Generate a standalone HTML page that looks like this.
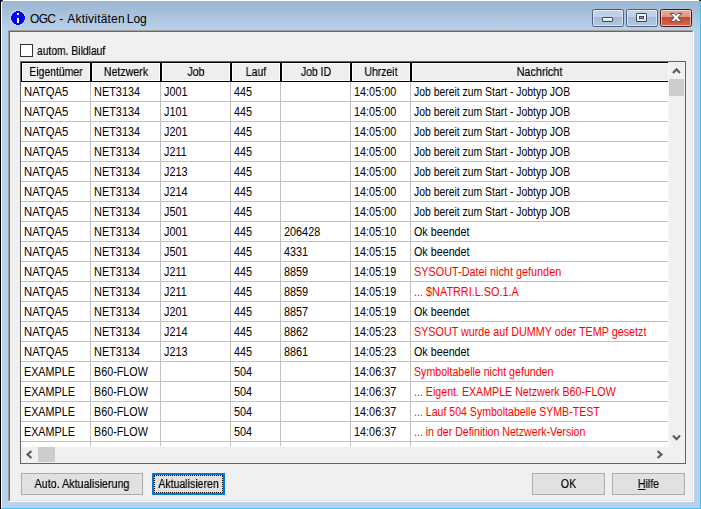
<!DOCTYPE html>
<html><head><meta charset="utf-8"><title>OGC - Aktivitäten Log</title>
<style>
html,body{margin:0;padding:0;}
body{width:701px;height:509px;overflow:hidden;position:relative;background:#b9d1ea;font-family:"Liberation Sans",sans-serif;}
div,span{position:absolute;box-sizing:border-box;}
.t{white-space:nowrap;color:#000;}
#titlebg{left:0;top:0;width:701px;height:30px;background:linear-gradient(#99b4d1,#b9d1ea);}
#client{left:8px;top:30px;width:686px;height:472px;background:#f0f0f0;border-top:1px solid #a0a0a0;border-left:1px solid #a0a0a0;border-right:1px solid #fff;border-bottom:1px solid #fff;}
#client2{left:9px;top:31px;width:684px;height:470px;border-top:1px solid #696969;border-left:1px solid #696969;border-right:1px solid #e3e3e3;border-bottom:1px solid #e3e3e3;}
.cb{left:592px;top:9px;width:32px;height:18px;border:1px solid #4f5e7b;border-radius:2.5px;background:linear-gradient(#bfd2e8 0,#bcd0e7 44%,#a3bad6 45%,#b2c8e2 100%);}
.cb:after{content:"";position:absolute;left:0;top:0;right:0;bottom:0;border:1px solid rgba(255,255,255,.55);border-radius:1.5px;}
.hc{top:62px;height:20px;border:1px solid #000;background:#eee;}
.hc:after{content:"";position:absolute;left:0;top:0;right:0;bottom:0;border:1px solid #fff;}
.ht{will-change:transform;top:62px;height:20px;line-height:20px;font-size:12px;text-align:center;transform:scaleX(.87);-webkit-text-stroke:0.2px #000;}
.c{font-size:12px;height:19px;line-height:19px;transform:scaleX(.905);transform-origin:0 0;}
.r{color:#f00;}
.hl{left:21px;width:647px;height:1px;background:#c0c0c0;}
.vl{top:82px;height:364px;width:1px;background:#c0c0c0;}
.btn{top:473px;height:22px;background:#e1e1e1;border:1px solid #adadad;}
.bt{will-change:transform;top:473px;height:22px;line-height:22px;font-size:12px;text-align:center;transform:scaleX(.88);-webkit-text-stroke:0.2px #000;}
</style></head><body>
<div id="titlebg"></div>
<div style="left:0;top:0;width:1px;height:509px;background:#000"></div>
<div style="left:1px;top:0;width:1px;height:508px;background:#fff"></div>
<div style="left:1px;top:0;width:699px;height:1px;background:#fff"></div>
<div style="left:700px;top:1px;width:1px;height:508px;background:#36c6ee"></div>
<div style="left:1px;top:508px;width:700px;height:1px;background:#36c6ee"></div>
<div style="left:0;top:0;width:3px;height:1px;background:#222"></div><div style="left:1px;top:1px;width:1px;height:1px;background:#333"></div><div style="left:0;top:0;width:1px;height:1px;background:#aaa"></div>
<div style="left:0;top:0;width:1px;height:3px;background:#000"></div>
<div style="left:699px;top:0;width:2px;height:1px;background:#222"></div>

<div style="left:10px;top:10px;width:16px;height:16px;border-radius:8px;background:rgba(214,236,222,.55)"></div>
<svg style="position:absolute;left:11px;top:11px" width="14" height="14" shape-rendering="crispEdges">
<rect x="5" y="0" width="4" height="1" fill="#0000ff"/>
<rect x="3" y="1" width="8" height="1" fill="#0000ff"/>
<rect x="2" y="2" width="10" height="1" fill="#0000ff"/>
<rect x="1" y="3" width="12" height="1" fill="#0000ff"/>
<rect x="1" y="4" width="12" height="1" fill="#0000ff"/>
<rect x="0" y="5" width="14" height="1" fill="#0000ff"/>
<rect x="0" y="6" width="14" height="1" fill="#0000ff"/>
<rect x="0" y="7" width="14" height="1" fill="#0000ff"/>
<rect x="0" y="8" width="14" height="1" fill="#0000ff"/>
<rect x="1" y="9" width="12" height="1" fill="#0000ff"/>
<rect x="1" y="10" width="12" height="1" fill="#0000ff"/>
<rect x="2" y="11" width="10" height="1" fill="#0000ff"/>
<rect x="3" y="12" width="8" height="1" fill="#0000ff"/>
<rect x="5" y="13" width="4" height="1" fill="#0000ff"/>
<rect x="6" y="2" width="2" height="2" fill="#fff"/><rect x="6" y="7" width="2" height="5" fill="#fff"/></svg>
<span class="t" id="title" style="left:30px;top:12px;font-size:12px;line-height:14px;"><span style="position:static;letter-spacing:-0.7px">OGC</span><span style="position:static;word-spacing:0.7px"> - </span><span style="position:static;letter-spacing:0.2px">Aktivitäten</span><span style="position:static;margin-left:-1.5px"> Log</span></span>
<div class="cb" style="left:592px"></div>
<div class="cb" style="left:626px"></div>
<div class="cb" style="left:660px;border-color:#47141c;background:linear-gradient(#e9a99a 0,#e09383 44%,#c4492b 45%,#d4694d 100%)"></div>
<div style="left:602px;top:17px;width:11px;height:5px;background:linear-gradient(#fff,#d9dde5);border:1px solid #414960;border-radius:1px"></div>
<div style="left:636px;top:13px;width:11px;height:9px;background:linear-gradient(#fff,#dde1e8);border:1px solid #414960;border-radius:1px"></div>
<div style="left:639px;top:16px;width:5px;height:3px;background:#8fb0d8;border:1px solid #3c445c"></div>
<svg style="position:absolute;left:667.6px;top:11px" width="16" height="13" viewBox="-2 -2 16 13"><path d="M0.2 0.4H4.2L6 2.4 7.8 0.4H11.8L8 4.5 11.8 8.6H7.8L6 6.6 4.2 8.6H0.2L4 4.5Z" fill="#fff" stroke="#45404a" stroke-width="0.9" stroke-linejoin="round"/></svg>
<div id="client"></div><div id="client2"></div>
<div style="left:20px;top:44px;width:13px;height:13px;background:#fff;border:1px solid #333"></div>
<span class="t" id="cblabel" style="will-change:transform;left:37px;top:44px;font-size:12px;line-height:15px;transform:scaleX(.86);transform-origin:0 0;-webkit-text-stroke:0.2px #000">autom. Bildlauf</span>
<div style="left:20px;top:61px;width:666px;height:403px;border:1px solid #646464;background:#fff"></div>
<div class="hc" style="left:21px;width:70px"></div>
<span class="t ht" style="left:21px;width:70px;transform:scaleX(0.8700)">Eigentümer</span>
<div class="hc" style="left:91px;width:70px"></div>
<span class="t ht" style="left:91px;width:70px;transform:scaleX(0.8882)">Netzwerk</span>
<div class="hc" style="left:161px;width:70px"></div>
<span class="t ht" style="left:161px;width:70px;transform:scaleX(0.8700)">Job</span>
<div class="hc" style="left:231px;width:50px"></div>
<span class="t ht" style="left:231px;width:50px;transform:scaleX(0.8700)">Lauf</span>
<div class="hc" style="left:281px;width:70px"></div>
<span class="t ht" style="left:281px;width:70px;transform:scaleX(0.8700)">Job ID</span>
<div class="hc" style="left:351px;width:60px"></div>
<span class="t ht" style="left:351px;width:60px;transform:scaleX(0.8700)">Uhrzeit</span>
<div class="hc" style="left:411px;width:269px"></div>
<span class="t ht" style="left:411px;width:257px;transform:scaleX(0.9036)">Nachricht</span>
<div class="hl" style="top:101px"></div>
<span class="c t" style="left:24px;top:83px;transform:scaleX(0.9382)">NATQA5</span>
<span class="c t" style="left:94px;top:83px;transform:scaleX(0.9091)">NET3134</span>
<span class="c t" style="left:164px;top:83px;transform:scaleX(0.9050)">J001</span>
<span class="c t" style="left:234px;top:83px;transform:scaleX(0.9050)">445</span>
<span class="c t" style="left:354px;top:83px;transform:scaleX(0.9050)">14:05:00</span>
<span class="c t" style="left:414px;top:83px;transform:scaleX(0.8667)">Job bereit zum Start - Jobtyp JOB</span>
<div class="hl" style="top:121px"></div>
<span class="c t" style="left:24px;top:103px;transform:scaleX(0.9382)">NATQA5</span>
<span class="c t" style="left:94px;top:103px;transform:scaleX(0.9091)">NET3134</span>
<span class="c t" style="left:164px;top:103px;transform:scaleX(0.9050)">J101</span>
<span class="c t" style="left:234px;top:103px;transform:scaleX(0.9050)">445</span>
<span class="c t" style="left:354px;top:103px;transform:scaleX(0.9050)">14:05:00</span>
<span class="c t" style="left:414px;top:103px;transform:scaleX(0.8667)">Job bereit zum Start - Jobtyp JOB</span>
<div class="hl" style="top:141px"></div>
<span class="c t" style="left:24px;top:123px;transform:scaleX(0.9382)">NATQA5</span>
<span class="c t" style="left:94px;top:123px;transform:scaleX(0.9091)">NET3134</span>
<span class="c t" style="left:164px;top:123px;transform:scaleX(0.9050)">J201</span>
<span class="c t" style="left:234px;top:123px;transform:scaleX(0.9050)">445</span>
<span class="c t" style="left:354px;top:123px;transform:scaleX(0.9050)">14:05:00</span>
<span class="c t" style="left:414px;top:123px;transform:scaleX(0.8667)">Job bereit zum Start - Jobtyp JOB</span>
<div class="hl" style="top:161px"></div>
<span class="c t" style="left:24px;top:143px;transform:scaleX(0.9382)">NATQA5</span>
<span class="c t" style="left:94px;top:143px;transform:scaleX(0.9091)">NET3134</span>
<span class="c t" style="left:164px;top:143px;transform:scaleX(0.9050)">J211</span>
<span class="c t" style="left:234px;top:143px;transform:scaleX(0.9050)">445</span>
<span class="c t" style="left:354px;top:143px;transform:scaleX(0.9050)">14:05:00</span>
<span class="c t" style="left:414px;top:143px;transform:scaleX(0.8667)">Job bereit zum Start - Jobtyp JOB</span>
<div class="hl" style="top:181px"></div>
<span class="c t" style="left:24px;top:163px;transform:scaleX(0.9382)">NATQA5</span>
<span class="c t" style="left:94px;top:163px;transform:scaleX(0.9091)">NET3134</span>
<span class="c t" style="left:164px;top:163px;transform:scaleX(0.9050)">J213</span>
<span class="c t" style="left:234px;top:163px;transform:scaleX(0.9050)">445</span>
<span class="c t" style="left:354px;top:163px;transform:scaleX(0.9050)">14:05:00</span>
<span class="c t" style="left:414px;top:163px;transform:scaleX(0.8667)">Job bereit zum Start - Jobtyp JOB</span>
<div class="hl" style="top:201px"></div>
<span class="c t" style="left:24px;top:183px;transform:scaleX(0.9382)">NATQA5</span>
<span class="c t" style="left:94px;top:183px;transform:scaleX(0.9091)">NET3134</span>
<span class="c t" style="left:164px;top:183px;transform:scaleX(0.9050)">J214</span>
<span class="c t" style="left:234px;top:183px;transform:scaleX(0.9050)">445</span>
<span class="c t" style="left:354px;top:183px;transform:scaleX(0.9050)">14:05:00</span>
<span class="c t" style="left:414px;top:183px;transform:scaleX(0.8667)">Job bereit zum Start - Jobtyp JOB</span>
<div class="hl" style="top:221px"></div>
<span class="c t" style="left:24px;top:203px;transform:scaleX(0.9382)">NATQA5</span>
<span class="c t" style="left:94px;top:203px;transform:scaleX(0.9091)">NET3134</span>
<span class="c t" style="left:164px;top:203px;transform:scaleX(0.9050)">J501</span>
<span class="c t" style="left:234px;top:203px;transform:scaleX(0.9050)">445</span>
<span class="c t" style="left:354px;top:203px;transform:scaleX(0.9050)">14:05:00</span>
<span class="c t" style="left:414px;top:203px;transform:scaleX(0.8667)">Job bereit zum Start - Jobtyp JOB</span>
<div class="hl" style="top:241px"></div>
<span class="c t" style="left:24px;top:223px;transform:scaleX(0.9382)">NATQA5</span>
<span class="c t" style="left:94px;top:223px;transform:scaleX(0.9091)">NET3134</span>
<span class="c t" style="left:164px;top:223px;transform:scaleX(0.9050)">J001</span>
<span class="c t" style="left:234px;top:223px;transform:scaleX(0.9050)">445</span>
<span class="c t" style="left:284px;top:223px;transform:scaleX(0.9050)">206428</span>
<span class="c t" style="left:354px;top:223px;transform:scaleX(0.9050)">14:05:10</span>
<span class="c t" style="left:414px;top:223px;transform:scaleX(0.8954)">Ok beendet</span>
<div class="hl" style="top:261px"></div>
<span class="c t" style="left:24px;top:243px;transform:scaleX(0.9382)">NATQA5</span>
<span class="c t" style="left:94px;top:243px;transform:scaleX(0.9091)">NET3134</span>
<span class="c t" style="left:164px;top:243px;transform:scaleX(0.9050)">J501</span>
<span class="c t" style="left:234px;top:243px;transform:scaleX(0.9050)">445</span>
<span class="c t" style="left:284px;top:243px;transform:scaleX(0.9050)">4331</span>
<span class="c t" style="left:354px;top:243px;transform:scaleX(0.9050)">14:05:15</span>
<span class="c t" style="left:414px;top:243px;transform:scaleX(0.8954)">Ok beendet</span>
<div class="hl" style="top:281px"></div>
<span class="c t" style="left:24px;top:263px;transform:scaleX(0.9382)">NATQA5</span>
<span class="c t" style="left:94px;top:263px;transform:scaleX(0.9091)">NET3134</span>
<span class="c t" style="left:164px;top:263px;transform:scaleX(0.9050)">J211</span>
<span class="c t" style="left:234px;top:263px;transform:scaleX(0.9050)">445</span>
<span class="c t" style="left:284px;top:263px;transform:scaleX(0.9050)">8859</span>
<span class="c t" style="left:354px;top:263px;transform:scaleX(0.9050)">14:05:19</span>
<span class="c t r" style="left:414px;top:263px;transform:scaleX(0.9045)">SYSOUT-Datei nicht gefunden</span>
<div class="hl" style="top:301px"></div>
<span class="c t" style="left:24px;top:283px;transform:scaleX(0.9382)">NATQA5</span>
<span class="c t" style="left:94px;top:283px;transform:scaleX(0.9091)">NET3134</span>
<span class="c t" style="left:164px;top:283px;transform:scaleX(0.9050)">J211</span>
<span class="c t" style="left:234px;top:283px;transform:scaleX(0.9050)">445</span>
<span class="c t" style="left:284px;top:283px;transform:scaleX(0.9050)">8859</span>
<span class="c t" style="left:354px;top:283px;transform:scaleX(0.9050)">14:05:19</span>
<span class="c t r" style="left:414px;top:283px;transform:scaleX(0.9050)">... $NATRRI.L.SO.1.A</span>
<div class="hl" style="top:321px"></div>
<span class="c t" style="left:24px;top:303px;transform:scaleX(0.9382)">NATQA5</span>
<span class="c t" style="left:94px;top:303px;transform:scaleX(0.9091)">NET3134</span>
<span class="c t" style="left:164px;top:303px;transform:scaleX(0.9050)">J201</span>
<span class="c t" style="left:234px;top:303px;transform:scaleX(0.9050)">445</span>
<span class="c t" style="left:284px;top:303px;transform:scaleX(0.9050)">8857</span>
<span class="c t" style="left:354px;top:303px;transform:scaleX(0.9050)">14:05:19</span>
<span class="c t" style="left:414px;top:303px;transform:scaleX(0.8954)">Ok beendet</span>
<div class="hl" style="top:341px"></div>
<span class="c t" style="left:24px;top:323px;transform:scaleX(0.9382)">NATQA5</span>
<span class="c t" style="left:94px;top:323px;transform:scaleX(0.9091)">NET3134</span>
<span class="c t" style="left:164px;top:323px;transform:scaleX(0.9050)">J214</span>
<span class="c t" style="left:234px;top:323px;transform:scaleX(0.9050)">445</span>
<span class="c t" style="left:284px;top:323px;transform:scaleX(0.9050)">8862</span>
<span class="c t" style="left:354px;top:323px;transform:scaleX(0.9050)">14:05:23</span>
<span class="c t r" style="left:414px;top:323px;transform:scaleX(0.8965)">SYSOUT wurde auf DUMMY oder TEMP gesetzt</span>
<div class="hl" style="top:361px"></div>
<span class="c t" style="left:24px;top:343px;transform:scaleX(0.9382)">NATQA5</span>
<span class="c t" style="left:94px;top:343px;transform:scaleX(0.9091)">NET3134</span>
<span class="c t" style="left:164px;top:343px;transform:scaleX(0.9050)">J213</span>
<span class="c t" style="left:234px;top:343px;transform:scaleX(0.9050)">445</span>
<span class="c t" style="left:284px;top:343px;transform:scaleX(0.9050)">8861</span>
<span class="c t" style="left:354px;top:343px;transform:scaleX(0.9050)">14:05:23</span>
<span class="c t" style="left:414px;top:343px;transform:scaleX(0.8954)">Ok beendet</span>
<div class="hl" style="top:381px"></div>
<span class="c t" style="left:24px;top:363px;transform:scaleX(0.8977)">EXAMPLE</span>
<span class="c t" style="left:94px;top:363px;transform:scaleX(0.8965)">B60-FLOW</span>
<span class="c t" style="left:234px;top:363px;transform:scaleX(0.9050)">504</span>
<span class="c t" style="left:354px;top:363px;transform:scaleX(0.9050)">14:06:37</span>
<span class="c t r" style="left:414px;top:363px;transform:scaleX(0.8857)">Symboltabelle nicht gefunden</span>
<div class="hl" style="top:401px"></div>
<span class="c t" style="left:24px;top:383px;transform:scaleX(0.8977)">EXAMPLE</span>
<span class="c t" style="left:94px;top:383px;transform:scaleX(0.8965)">B60-FLOW</span>
<span class="c t" style="left:234px;top:383px;transform:scaleX(0.9050)">504</span>
<span class="c t" style="left:354px;top:383px;transform:scaleX(0.9050)">14:06:37</span>
<span class="c t r" style="left:414px;top:383px;transform:scaleX(0.8869)">... Eigent. EXAMPLE Netzwerk B60-FLOW</span>
<div class="hl" style="top:421px"></div>
<span class="c t" style="left:24px;top:403px;transform:scaleX(0.8977)">EXAMPLE</span>
<span class="c t" style="left:94px;top:403px;transform:scaleX(0.8965)">B60-FLOW</span>
<span class="c t" style="left:234px;top:403px;transform:scaleX(0.9050)">504</span>
<span class="c t" style="left:354px;top:403px;transform:scaleX(0.9050)">14:06:37</span>
<span class="c t r" style="left:414px;top:403px;transform:scaleX(0.8811)">... Lauf 504 Symboltabelle SYMB-TEST</span>
<div class="hl" style="top:441px"></div>
<span class="c t" style="left:24px;top:423px;transform:scaleX(0.8977)">EXAMPLE</span>
<span class="c t" style="left:94px;top:423px;transform:scaleX(0.8965)">B60-FLOW</span>
<span class="c t" style="left:234px;top:423px;transform:scaleX(0.9050)">504</span>
<span class="c t" style="left:354px;top:423px;transform:scaleX(0.9050)">14:06:37</span>
<span class="c t r" style="left:414px;top:423px;transform:scaleX(0.8827)">... in der Definition Netzwerk-Version</span>
<div class="vl" style="left:90px"></div>
<div class="vl" style="left:160px"></div>
<div class="vl" style="left:230px"></div>
<div class="vl" style="left:280px"></div>
<div class="vl" style="left:350px"></div>
<div class="vl" style="left:410px"></div>
<div style="left:668px;top:62px;width:17px;height:401px;background:#f0f0f0;border-left:1px solid #fbfbfb"></div>
<div style="left:21px;top:447px;width:664px;height:16px;background:#f0f0f0"></div>
<div style="left:669px;top:79px;width:15px;height:17px;background:#cdcdcd"></div>
<div style="left:38px;top:447px;width:17px;height:15px;background:#cdcdcd"></div>
<svg style="position:absolute;left:671px;top:66px" width="12" height="10"><polyline points="2,7 5.5,3.2 9,7" fill="none" stroke="#5a5a5a" stroke-width="2.1"/></svg>
<svg style="position:absolute;left:671px;top:432px" width="12" height="10"><polyline points="2,3.5 5.5,7.3 9,3.5" fill="none" stroke="#5a5a5a" stroke-width="2.1"/></svg>
<svg style="position:absolute;left:24px;top:448px" width="10" height="14"><polyline points="7.5,3 3.5,6.5 7.5,10" fill="none" stroke="#5a5a5a" stroke-width="2.1"/></svg>
<svg style="position:absolute;left:655px;top:448px" width="10" height="14"><polyline points="2.5,3 6.5,6.5 2.5,10" fill="none" stroke="#5a5a5a" stroke-width="2.1"/></svg>
<div class="btn" style="left:21px;width:122px"></div><span class="t bt" style="left:21px;width:122px;transform:scaleX(.895)">Auto. Aktualisierung</span>
<div class="btn" style="left:152px;width:73px;border:2px solid #0078d7"></div><div style="left:154px;top:475px;width:69px;height:18px;border:1px dotted #000"></div><span class="t bt" style="left:152px;width:73px">Aktualisieren</span>
<div class="btn" style="left:532px;width:73px"></div><span class="t bt" style="left:532px;width:73px">OK</span>
<div class="btn" style="left:612px;width:73px"></div><span class="t bt" style="left:612px;width:73px"><u>H</u>ilfe</span>
</body></html>
